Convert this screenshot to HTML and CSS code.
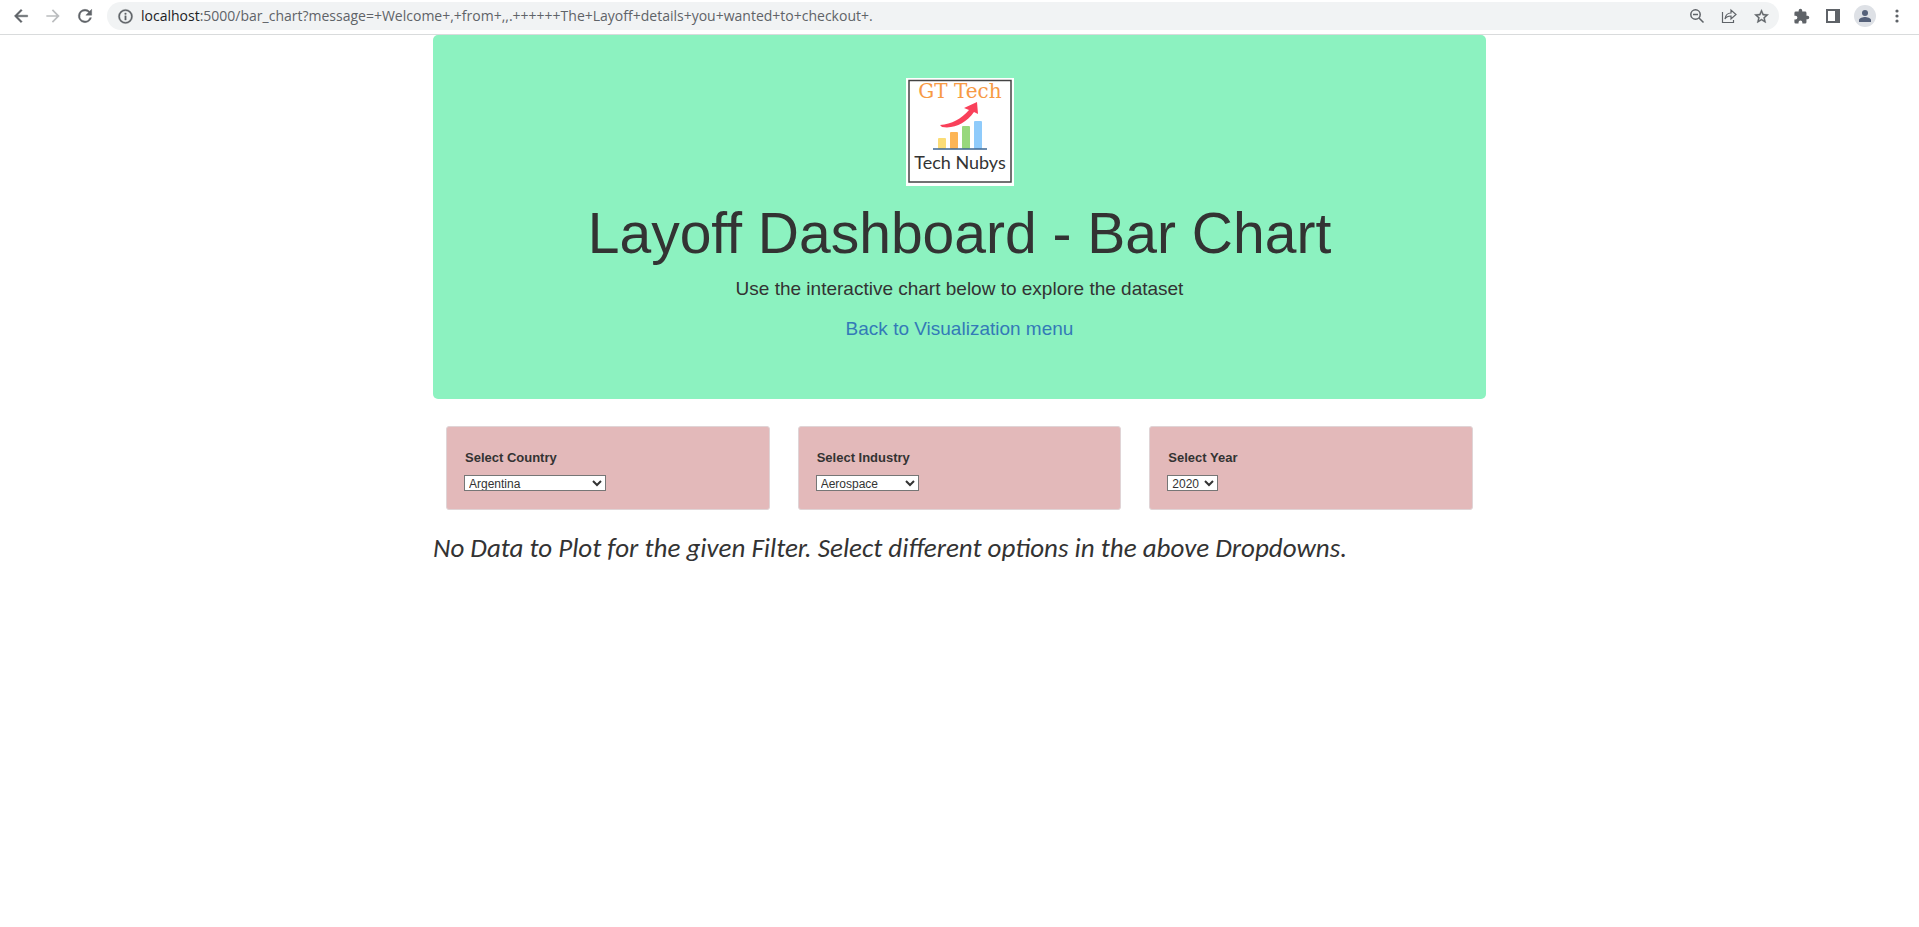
FILE: index.html
```html
<!DOCTYPE html>
<html lang="en">
<head>
<meta charset="utf-8">
<title>Layoff Dashboard - Bar Chart</title>
<link rel="stylesheet" href="styles.css">
</head>
<body>
<header class="toolbar">
  <div class="group">
    <button class="tool" aria-label="Back"><svg class="icon-lg" viewBox="0 0 24 24"><path class="bold" d="M20 11H7.83l5.59-5.59L12 4l-8 8 8 8 1.41-1.41L7.83 13H20z"/></svg></button>
    <button class="tool tool-off" aria-label="Forward" disabled><svg class="icon-lg" viewBox="0 0 24 24"><path d="M12 4l-1.41 1.41L16.17 11H4v2h12.17l-5.58 5.59L12 20l8-8z"/></svg></button>
    <button class="tool" aria-label="Reload"><svg class="icon-lg" viewBox="0 0 24 24"><path class="bold" d="M17.65 6.35A7.96 7.96 0 0 0 12 4a8 8 0 1 0 7.73 10h-2.08A6 6 0 1 1 12 6c1.66 0 3.14.69 4.22 1.78L13 11h7V4z"/></svg></button>
  </div>
  <div class="address">
    <button class="info" aria-label="Site information"><svg class="icon-md" viewBox="0 0 24 24"><path class="bold" d="M11 7h2v2h-2zm0 4h2v6h-2zm1-9a10 10 0 1 0 0 20 10 10 0 0 0 0-20zm0 18a8 8 0 1 1 0-16 8 8 0 0 1 0 16z"/></svg></button>
    <a class="url" href="#"><span class="host">localhost</span>:5000/bar_chart?message=+Welcome+,+from+,,.++++++The+Layoff+details+you+wanted+to+checkout+.</a>
    <button class="tool" aria-label="Zoom out"><svg class="icon-sm" viewBox="0 0 16 16"><g class="line"><circle cx="6.500" cy="6.500" r="4.700"/><path d="M4 6.500h5M10 10l4.500 4.500"/></g></svg></button>
    <button class="tool" aria-label="Share"><svg class="icon-sm" viewBox="0 0 16 16"><path class="line thin" d="M1.500 4v10.500h11V12M4 11C4.500 7 6.500 5 10 5V2l5 4.500-5 4.500V8c-3 0-4.800.8-6 3z"/></svg></button>
    <button class="tool" aria-label="Bookmark"><svg class="icon-md" viewBox="0 0 24 24"><path class="bold" d="M22 9.240l-7.190-.62L12 2 9.190 8.630 2 9.240l5.460 4.730L5.820 21 12 17.270 18.180 21l-1.630-7.030zM12 15.400l-3.760 2.270 1-4.280-3.320-2.880 4.380-.38L12 6.100l1.710 4.040 4.380.38-3.320 2.880 1 4.280z"/></svg></button>
  </div>
  <div class="group">
    <button class="tool" aria-label="Extensions"><svg class="icon-md" viewBox="0 0 24 24"><path d="M20.500 11H19V7a2 2 0 0 0-2-2h-4V3.500a2.500 2.500 0 0 0-5 0V5H4a2 2 0 0 0-2 2v3.800h1.500a2.700 2.700 0 0 1 0 5.400H2V20a2 2 0 0 0 2 2h3.800v-1.500a2.700 2.700 0 0 1 5.400 0V22H17a2 2 0 0 0 2-2v-4h1.500a2.500 2.500 0 0 0 0-5z"/></svg></button>
    <button class="tool" aria-label="Side panel"><svg class="icon-sm" viewBox="0 0 16 16"><path fill-rule="evenodd" d="M1 1h14v14H1zM3 3v10h7V3z"/></svg></button>
    <button class="tool" aria-label="Profile"><svg class="avatar" viewBox="0 0 22 22"><circle class="disc" cx="11" cy="11" r="11"/><circle class="person" cx="11" cy="8" r="3"/><path class="person" d="M5 17v-2c0-2 4-3 6-3s6 1 6 3v2z"/></svg></button>
    <button class="tool" aria-label="Menu"><svg class="icon-sm" viewBox="0 0 16 16"><circle cx="8" cy="3" r="1.600"/><circle cx="8" cy="8" r="1.600"/><circle cx="8" cy="13" r="1.600"/></svg></button>
  </div>
</header>
<main class="container">
  <section class="hero">
    <svg class="logo" viewBox="0 0 108 108" role="img" aria-label="GT Tech, Tech Nubys">
      <rect width="108" height="108" fill="#fff"/>
      <rect x="3" y="2.500" width="102" height="101.500" fill="#fff" stroke="#444" stroke-width="1.500"/>
      <text class="logo-top" x="54" y="20">GT Tech</text>
      <rect x="32" y="60" width="8" height="11" rx="1" fill="#fbdc76"/>
      <rect x="44" y="54" width="8" height="17" rx="1" fill="#fdb555"/>
      <rect x="56" y="48" width="8" height="23" rx="1" fill="#98d87c"/>
      <rect x="68" y="43" width="8" height="28" rx="1" fill="#8fcbfb"/>
      <path d="M27 71h54" stroke="#3c6690" stroke-width="1.500"/>
      <path d="M34 47C46 46 55 41 63 32l-5-2 13-6 1 12-4-2C60 45 49 51 36 49z" fill="#f9405a"/>
      <text class="logo-name" x="54" y="91">Tech Nubys</text>
    </svg>
    <h1 class="title">Layoff Dashboard - Bar Chart</h1>
    <p class="lead">Use the interactive chart below to explore the dataset</p>
    <p class="lead"><a class="back" href="#">Back to Visualization menu</a></p>
  </section>
  <form class="filters">
    <div class="well">
      <label class="label" for="country">Select Country</label>
      <select class="select select-country" id="country"><option>Argentina</option></select>
    </div>
    <div class="well">
      <label class="label" for="industry">Select Industry</label>
      <select class="select select-industry" id="industry"><option>Aerospace</option></select>
    </div>
    <div class="well">
      <label class="label" for="year">Select Year</label>
      <select class="select select-year" id="year"><option>2020</option></select>
    </div>
  </form>
  <p class="message">No Data to Plot for the given Filter. Select different options in the above Dropdowns.</p>
</main>
</body>
</html>
```
FILE: styles.css
```css
* { box-sizing: border-box; }
body {
  margin: 0;
  background: #fff;
  color: #333;
  font-family: "Liberation Sans", Arial, sans-serif;
  font-size: 13px;
}
.toolbar {
  display: flex;
  align-items: center;
  gap: 6px;
  padding: 2px 6px 4px 5px;
  border-bottom: 1px solid #d9dbdc;
}
.group { display: flex; }
.tool, .info {
  display: flex;
  align-items: center;
  justify-content: center;
  flex: none;
  width: 32px;
  height: 28px;
  padding: 0;
  border: 0;
  background: none;
  fill: #5f6368;
}
.info { width: 24px; }
.tool-off { fill: #bbbdbf; }
.icon-lg { width: 20px; height: 20px; }
.icon-md { width: 17px; height: 17px; }
.icon-sm { width: 16px; height: 16px; }
.bold { stroke: #5f6368; stroke-width: 0.5; }
.line { fill: none; stroke: #5f6368; stroke-width: 1.5; }
.thin { stroke-width: 1.2; }
.avatar { width: 22px; height: 22px; }
.disc { fill: #dee1e6; }
.person { fill: #55617a; }
.address {
  display: flex;
  align-items: center;
  flex: 1;
  min-width: 0;
  padding: 0 2px 0 6px;
  border-radius: 14px;
  background: #f1f3f4;
}
.url {
  flex: 1;
  min-width: 0;
  padding-left: 4px;
  overflow: hidden;
  white-space: nowrap;
  color: #5f6368;
  font: 14px/20px "Open Sans", "Noto Sans", sans-serif;
  text-decoration: none;
}
.host { color: #202124; }
.container {
  max-width: 1053px;
  margin: 0 auto;
}
.hero {
  display: flex;
  flex-direction: column;
  align-items: center;
  padding: 43px 54px;
  border-radius: 5px;
  background: #8cf2c0;
  text-align: center;
}
.logo { width: 108px; height: 108px; }
.logo-top {
  fill: #f79a45;
  font: 20px "DejaVu Serif", serif;
  text-anchor: middle;
}
.logo-name {
  fill: #333;
  font: 18px Lato, sans-serif;
  text-anchor: middle;
}
.title {
  margin: 16px 0 12px;
  font-size: 57px;
  font-weight: 400;
  line-height: 62px;
}
.lead {
  margin: 0 0 14px;
  font-size: 19px;
  line-height: 26px;
}
.back { color: #337ab7; text-decoration: none; }
.filters {
  display: grid;
  grid-template-columns: repeat(3, 1fr);
  gap: 28px;
  padding: 27px 13px 18px;
}
.well {
  display: flex;
  flex-direction: column;
  align-items: flex-start;
  gap: 8px;
  padding: 22px 17px 18px;
  border: 1px solid #e0d4d6;
  border-radius: 3px;
  background: #e3b9ba;
}
.label {
  padding-left: 1px;
  font-weight: 700;
  line-height: 18px;
}
.select {
  height: 16px;
  padding: 0;
  border: 1px solid #767676;
  border-radius: 0;
  background: #fff;
  color: #333;
  font: 12px/14px "Liberation Sans", Arial, sans-serif;
}
.select-country { width: 142px; }
.select-industry { width: 103px; }
.select-year { width: 51px; }
.message {
  margin: 0;
  font: italic 27px/40px Calibri, Carlito, Lato, sans-serif;
}
```
